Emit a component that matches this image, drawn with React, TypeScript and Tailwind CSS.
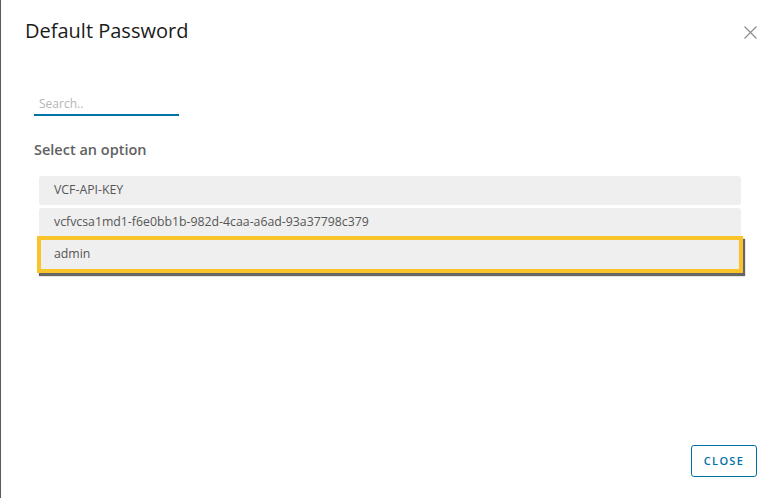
import React, { useState } from 'react';

const OPTIONS = [
  'VCF-API-KEY',
  'vcfvcsa1md1-f6e0bb1b-982d-4caa-a6ad-93a37798c379',
  'admin',
];

const FONT = "font-['Open_Sans','Liberation_Sans',sans-serif]";

export default function App() {
  const [query, setQuery] = useState('');
  const selected = 2;

  return (
    <div className={`relative flex h-[498px] w-[776px] flex-col border-l border-[#5a5a5a] bg-white ${FONT}`}>
      {/* header */}
      <div className="flex items-start justify-between pl-[24px] pr-[19px] pt-[17px]">
        <h3 className="text-[20px] font-normal leading-[28px] text-[#1b1b1b]">Default Password</h3>
        <button className="mt-[9px] text-[#8a8a8a]" aria-label="Close">
          <svg width="13" height="13" viewBox="0 0 13 13" fill="none" stroke="currentColor" strokeWidth="1.1">
            <path d="M0.5 0.5 L12.5 12.5 M12.5 0.5 L0.5 12.5" />
          </svg>
        </button>
      </div>

      {/* body */}
      <div className="flex flex-col pl-[33px] pr-[35px]">
        <div className="mt-[45px] w-[145px] border-b-2 border-[#0072a3]">
          <input
            autoFocus
            value={query}
            onChange={(e) => setQuery(e.target.value)}
            placeholder="Search.."
            className="h-[19px] w-full pl-[5px] pt-[2px] text-[12px] text-[#565656] caret-black outline-none placeholder:text-[#b5b5b5]"
          />
        </div>

        <div className="mt-[25px] text-[14.5px] font-semibold leading-[18px] text-[#616161]">Select an option</div>

        <div className="mt-[17px] flex flex-col gap-[3px] pl-[5px]">
          {OPTIONS.filter((o) => o.toLowerCase().includes(query.toLowerCase())).map((opt, i) =>
            i === selected ? (
              <div
                key={opt}
                className="-mx-[2px] -my-[4px] border-4 border-[#f8c42a] shadow-[2px_3px_1px_rgba(0,0,0,0.6),inset_1px_2px_1px_rgba(0,0,0,0.2)]"
              >
                <div className="flex h-[29px] items-center bg-[#efefef] pl-[13px] text-[12.3px] text-[#565656]">{opt}</div>
              </div>
            ) : (
              <div key={opt} className="flex h-[29px] items-center rounded-[3px] bg-[#efefef] pl-[15px] text-[12.3px] text-[#565656]">
                {opt}
              </div>
            )
          )}
        </div>
      </div>

      {/* footer */}
      <div className="mt-auto flex justify-end pb-[21px] pr-[19px]">
        <button className="h-[32px] w-[66px] rounded-[3px] border border-[#0072a3] text-[11px] font-semibold tracking-[0.12em] text-[#0072a3]">
          CLOSE
        </button>
      </div>
    </div>
  );
}
